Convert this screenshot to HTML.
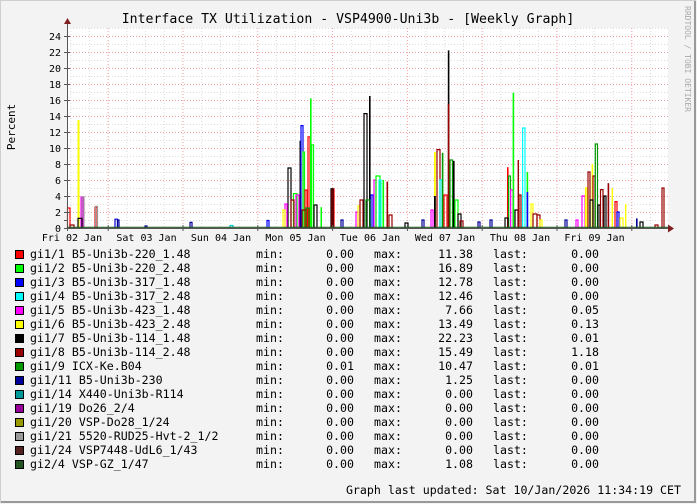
<!DOCTYPE html>
<html><head><meta charset="utf-8"><style>
html,body{margin:0;padding:0;background:#f3f3f3;}
svg{display:block;font-family:"DejaVu Sans Mono","Liberation Mono",monospace;}
</style></head><body>
<svg width="697" height="504" viewBox="0 0 697 504" xmlns="http://www.w3.org/2000/svg">
<rect x="0" y="0" width="697" height="504" fill="#f3f3f3"/>
<path d="M0.5 503 V0.5 H696" stroke="#cfcfcf" fill="none"/>
<path d="M1 502 H695 V1" stroke="#999" stroke-width="2" fill="none"/>
<rect x="67" y="28" width="601" height="200" fill="#ffffff"/>
<g stroke-dasharray="1,2" stroke-width="1">
<g stroke="#dddddd">
<path d="M67 220.5H668M67 204.5H668M67 188.5H668M67 172.5H668M67 156.5H668M67 140.5H668M67 124.5H668M67 108.5H668M67 92.5H668M67 76.5H668M67 60.5H668M67 44.5H668M67 28.5H668"/>
<path d="M70.8 28V228M89.5 28V228M126.9 28V228M145.6 28V228M164.3 28V228M201.7 28V228M220.4 28V228M239.1 28V228M276.5 28V228M295.2 28V228M313.9 28V228M351.3 28V228M370 28V228M388.7 28V228M426.1 28V228M444.8 28V228M463.5 28V228M500.9 28V228M519.6 28V228M538.3 28V228M575.7 28V228M594.4 28V228M613.1 28V228M650.5 28V228"/>
</g>
<g stroke="#f0a0a0">
<path d="M67 212.5H668M67 196.5H668M67 180.5H668M67 164.5H668M67 148.5H668M67 132.5H668M67 116.5H668M67 100.5H668M67 84.5H668M67 68.5H668M67 52.5H668M67 36.5H668"/>
<path d="M108.2 28V228M183 28V228M257.8 28V228M332.6 28V228M407.4 28V228M482.2 28V228M557 28V228M631.8 28V228"/>
</g>
</g>
<g fill="none" stroke-width="1.2">
<path d="M67.5 228V208H70V228" stroke="#ff0000"/>
<rect x="77.5" y="120" width="2" height="108" fill="#ffff00" stroke="none"/>
<path d="M81 228V196.8H83V228" stroke="#ff00ff"/>
<path d="M82 228V196.8H84V228" stroke="#999999"/>
<path d="M78 228V218.4H82V228" stroke="#000"/>
<path d="M95 228V207.2H97V228" stroke="#ff0000"/>
<path d="M95.5 228V206.4H97.5V228" stroke="#999999"/>
<path d="M70 228V225H74V228" stroke="#990000"/>
<path d="M115 228V219.2H117.5V228" stroke="#0000cc"/>
<path d="M117.5 228V220H119V228" stroke="#000099"/>
<path d="M145 228V226H147V228" stroke="#000099"/>
<path d="M190 228V222.4H192V228" stroke="#000099"/>
<path d="M267 228V220.5H269V228" stroke="#0000ff"/>
<path d="M230 228V225.5H233V228" stroke="#00cccc"/>
<path d="M288 228V168H291V228" stroke="#000"/>
<path d="M293.5 228V193.6H297V228" stroke="#00ff00"/>
<path d="M285 228V204H287V228" stroke="#ff00ff"/>
<path d="M283 228V210H285V228" stroke="#ffff00"/>
<path d="M291 228V200H294V228" stroke="#990000"/>
<rect x="299.5" y="140.8" width="1.5" height="87.2" fill="#000"/>
<path d="M301 228V125.6H303V228" stroke="#0000ff"/>
<path d="M303 228V152H304.5V228" stroke="#00ff00"/>
<path d="M305 228V190H307V228" stroke="#ff0000"/>
<path d="M308 228V136.8H310V228" stroke="#ff0000"/>
<rect x="310" y="98.4" width="1.6" height="129.6" fill="#00ff00"/>
<path d="M311.6 228V144.8H313.5V228" stroke="#00ff00"/>
<path d="M314 228V205H317V228" stroke="#000"/>
<path d="M296 228V195H299V228" stroke="#ff00ff"/>
<path d="M302 228V210H306V228" stroke="#990000"/>
<path d="M306 228V208H309V228" stroke="#009900"/>
<rect x="320.5" y="207.2" width="1.5" height="20.8" fill="#00ff00"/>
<path d="M332 228V188.8H334V228" stroke="#ff0000"/>
<path d="M331 228V188.8H333V228" stroke="#000"/>
<path d="M341 228V220H343V228" stroke="#000099"/>
<path d="M356 228V212H358V228" stroke="#ff00ff"/>
<path d="M358 228V206H360V228" stroke="#ffff00"/>
<path d="M360 228V200H363V228" stroke="#990000"/>
<path d="M364 228V113.6H367V228" stroke="#000"/>
<rect x="369" y="96" width="1.6" height="132" fill="#000"/>
<path d="M371 228V195H373V228" stroke="#0000ff"/>
<path d="M374 228V180H376V228" stroke="#ff00ff"/>
<path d="M376 228V176H380V228" stroke="#00ff00"/>
<path d="M379 228V180H381V228" stroke="#00ffff"/>
<rect x="382.5" y="180" width="1.6" height="48" fill="#00ff00"/>
<rect x="386.5" y="181.6" width="1.6" height="46.4" fill="#990000"/>
<path d="M366 228V200H370V228" stroke="#009900"/>
<path d="M389 228V215H392V228" stroke="#990000"/>
<path d="M405 228V223H408V228" stroke="#000"/>
<path d="M422 228V220H424V228" stroke="#000099"/>
<rect x="434" y="152" width="1.8" height="76" fill="#ffff00"/>
<rect x="434" y="196" width="1.8" height="32" fill="#000"/>
<path d="M437 228V149.6H440V228" stroke="#990000"/>
<path d="M440 228V180H442V228" stroke="#00ffff"/>
<rect x="441.8" y="152.8" width="1.6" height="75.2" fill="#009900"/>
<path d="M444 228V195H447V228" stroke="#ff0000"/>
<rect x="447.8" y="50.4" width="1.6" height="177.6" fill="#000"/>
<rect x="447.8" y="104" width="1.6" height="124" fill="#990000"/>
<path d="M450 228V160H452.5V228" stroke="#009900"/>
<rect x="453" y="160.8" width="1.6" height="67.2" fill="#000"/>
<path d="M455 228V200H458V228" stroke="#00ff00"/>
<path d="M458 228V214H461V228" stroke="#000"/>
<path d="M431 228V210H433V228" stroke="#ff00ff"/>
<path d="M478 228V222H480V228" stroke="#000099"/>
<path d="M490 228V220H492V228" stroke="#000099"/>
<path d="M460 228V221H463V228" stroke="#990000"/>
<rect x="507" y="167.2" width="1.6" height="60.8" fill="#ff0000"/>
<path d="M508.6 228V176H510.5V228" stroke="#00aa00"/>
<path d="M510.6 228V190H513V228" stroke="#ff00ff"/>
<rect x="512.6" y="92.8" width="1.6" height="135.2" fill="#00ff00"/>
<path d="M515 228V210H518V228" stroke="#000"/>
<rect x="517.6" y="160" width="1.4" height="68" fill="#990000"/>
<path d="M519 228V195H521V228" stroke="#990000"/>
<path d="M522.6 228V128H525V228" stroke="#00ffff"/>
<rect x="526.6" y="172" width="1.6" height="56" fill="#00ff00"/>
<rect x="526.6" y="192" width="1.6" height="36" fill="#0000ff"/>
<path d="M531 228V204H533V228" stroke="#ffff00"/>
<path d="M533 228V214H537V228" stroke="#990000"/>
<path d="M505 228V218H508V228" stroke="#000"/>
<path d="M537 228V215H540V228" stroke="#990000"/>
<path d="M540 228V220H542V228" stroke="#ffff00"/>
<path d="M565 228V220H567V228" stroke="#000099"/>
<path d="M576 228V220H578V228" stroke="#ff00ff"/>
<path d="M582 228V196H585V228" stroke="#ff00ff"/>
<path d="M585.5 228V188H587V228" stroke="#ffff00"/>
<path d="M588 228V172H590V228" stroke="#990000"/>
<rect x="591.6" y="164" width="1.6" height="64" fill="#ffff00"/>
<path d="M593 228V176H595V228" stroke="#990000"/>
<path d="M595.3 228V144H597.5V228" stroke="#009900"/>
<path d="M590 228V200H593V228" stroke="#000"/>
<path d="M598 228V205H600V228" stroke="#000"/>
<path d="M600.5 228V189.6H603V228" stroke="#990000"/>
<path d="M604 228V196H606V228" stroke="#000"/>
<rect x="607.6" y="183.2" width="1.6" height="44.8" fill="#990000"/>
<rect x="611.6" y="188" width="1.4" height="40" fill="#ffff00"/>
<path d="M615 228V201.6H617V228" stroke="#ff0000"/>
<path d="M617 228V212H619V228" stroke="#0000ff"/>
<path d="M620 228V218H623V228" stroke="#ffff00"/>
<rect x="625" y="204" width="1.4" height="24" fill="#ffff00"/>
<rect x="636" y="218.4" width="1.6" height="9.6" fill="#000099"/>
<path d="M640 228V222H643V228" stroke="#000"/>
<path d="M662 228V188H664V228" stroke="#990000"/>
<path d="M655 228V225H658V228" stroke="#990000"/>
<path d="M67 227.3H668" stroke="#225522" stroke-width="1.2"/>
</g>
<g stroke="#555" stroke-width="1">
<path d="M67.5 231V24"/>
<path d="M64 228.5H668"/>
<path d="M64 220.5H67M64 212.5H70M64 196.5H70M64 180.5H70M64 164.5H70M64 148.5H70M64 132.5H70M64 116.5H70M64 100.5H70M64 84.5H70M64 68.5H70M64 52.5H70M64 36.5H70"/>
<path d="M108.2 225V231M183 225V231M257.8 225V231M332.6 225V231M407.4 225V231M482.2 225V231M557 225V231M631.8 225V231"/>
</g>
<path d="M64 24L67.5 18L71 24Z" fill="#802020"/>
<path d="M668 224.5L674 228.5L668 232.5Z" fill="#802020"/>
<g font-size="10" fill="#000" text-anchor="end">
<text x="61" y="232">0</text><text x="61" y="216">2</text><text x="61" y="200">4</text><text x="61" y="184">6</text>
<text x="61" y="168">8</text><text x="61" y="152">10</text><text x="61" y="136">12</text><text x="61" y="120">14</text>
<text x="61" y="104">16</text><text x="61" y="88">18</text><text x="61" y="72">20</text><text x="61" y="56">22</text><text x="61" y="40">24</text>
</g>
<g font-size="10" fill="#000" text-anchor="middle">
<text x="72" y="241">Fri 02 Jan</text><text x="146.5" y="241">Sat 03 Jan</text><text x="221" y="241">Sun 04 Jan</text>
<text x="295.5" y="241">Mon 05 Jan</text><text x="370" y="241">Tue 06 Jan</text><text x="445" y="241">Wed 07 Jan</text>
<text x="520" y="241">Thu 08 Jan</text><text x="594.5" y="241">Fri 09 Jan</text>
</g>
<text x="348" y="23" font-size="13.2" text-anchor="middle" fill="#000">Interface TX Utilization - VSP4900-Uni3b - [Weekly Graph]</text>
<text transform="translate(15,127) rotate(-90)" font-size="11" text-anchor="middle" fill="#000">Percent</text>
<text transform="translate(685,6) rotate(90)" font-size="8" fill="#aaa">RRDTOOL / TOBI OETIKER</text>
<g font-size="11.6" fill="#000" style="white-space:pre">
<g stroke="#000" stroke-width="1">
<rect x="15.5" y="250.5" width="8" height="8" fill="#ff0000"/>
<rect x="15.5" y="264.5" width="8" height="8" fill="#00ff00"/>
<rect x="15.5" y="278.5" width="8" height="8" fill="#0000ff"/>
<rect x="15.5" y="292.5" width="8" height="8" fill="#00ffff"/>
<rect x="15.5" y="306.5" width="8" height="8" fill="#ff00ff"/>
<rect x="15.5" y="320.5" width="8" height="8" fill="#ffff00"/>
<rect x="15.5" y="334.5" width="8" height="8" fill="#000000"/>
<rect x="15.5" y="348.5" width="8" height="8" fill="#990000"/>
<rect x="15.5" y="362.5" width="8" height="8" fill="#009900"/>
<rect x="15.5" y="376.5" width="8" height="8" fill="#000099"/>
<rect x="15.5" y="390.5" width="8" height="8" fill="#009999"/>
<rect x="15.5" y="404.5" width="8" height="8" fill="#990099"/>
<rect x="15.5" y="418.5" width="8" height="8" fill="#999900"/>
<rect x="15.5" y="432.5" width="8" height="8" fill="#999999"/>
<rect x="15.5" y="446.5" width="8" height="8" fill="#552222"/>
<rect x="15.5" y="460.5" width="8" height="8" fill="#225522"/>
</g>
<text x="30" y="258">gi1/1 B5-Uni3b-220_1.48</text>
<text x="30" y="272">gi1/2 B5-Uni3b-220_2.48</text>
<text x="30" y="286">gi1/3 B5-Uni3b-317_1.48</text>
<text x="30" y="300">gi1/4 B5-Uni3b-317_2.48</text>
<text x="30" y="314">gi1/5 B5-Uni3b-423_1.48</text>
<text x="30" y="328">gi1/6 B5-Uni3b-423_2.48</text>
<text x="30" y="342">gi1/7 B5-Uni3b-114_1.48</text>
<text x="30" y="356">gi1/8 B5-Uni3b-114_2.48</text>
<text x="30" y="370">gi1/9 ICX-Ke.B04</text>
<text x="30" y="384">gi1/11 B5-Uni3b-230</text>
<text x="30" y="398">gi1/14 X440-Uni3b-R114</text>
<text x="30" y="412">gi1/19 Do26_2/4</text>
<text x="30" y="426">gi1/20 VSP-Do28_1/24</text>
<text x="30" y="440">gi1/21 5520-RUD25-Hvt-2_1/2</text>
<text x="30" y="454">gi1/24 VSP7448-UdL6_1/43</text>
<text x="30" y="468">gi2/4 VSP-GZ_1/47</text>
<g>
<text x="256" y="258">min:</text><text x="256" y="272">min:</text><text x="256" y="286">min:</text><text x="256" y="300">min:</text>
<text x="256" y="314">min:</text><text x="256" y="328">min:</text><text x="256" y="342">min:</text><text x="256" y="356">min:</text>
<text x="256" y="370">min:</text><text x="256" y="384">min:</text><text x="256" y="398">min:</text><text x="256" y="412">min:</text>
<text x="256" y="426">min:</text><text x="256" y="440">min:</text><text x="256" y="454">min:</text><text x="256" y="468">min:</text>
<text x="374" y="258">max:</text><text x="374" y="272">max:</text><text x="374" y="286">max:</text><text x="374" y="300">max:</text>
<text x="374" y="314">max:</text><text x="374" y="328">max:</text><text x="374" y="342">max:</text><text x="374" y="356">max:</text>
<text x="374" y="370">max:</text><text x="374" y="384">max:</text><text x="374" y="398">max:</text><text x="374" y="412">max:</text>
<text x="374" y="426">max:</text><text x="374" y="440">max:</text><text x="374" y="454">max:</text><text x="374" y="468">max:</text>
<text x="493" y="258">last:</text><text x="493" y="272">last:</text><text x="493" y="286">last:</text><text x="493" y="300">last:</text>
<text x="493" y="314">last:</text><text x="493" y="328">last:</text><text x="493" y="342">last:</text><text x="493" y="356">last:</text>
<text x="493" y="370">last:</text><text x="493" y="384">last:</text><text x="493" y="398">last:</text><text x="493" y="412">last:</text>
<text x="493" y="426">last:</text><text x="493" y="440">last:</text><text x="493" y="454">last:</text><text x="493" y="468">last:</text>
</g>
<g text-anchor="end">
<text x="354" y="258">0.00</text><text x="354" y="272">0.00</text><text x="354" y="286">0.00</text><text x="354" y="300">0.00</text>
<text x="354" y="314">0.00</text><text x="354" y="328">0.00</text><text x="354" y="342">0.00</text><text x="354" y="356">0.00</text>
<text x="354" y="370">0.01</text><text x="354" y="384">0.00</text><text x="354" y="398">0.00</text><text x="354" y="412">0.00</text>
<text x="354" y="426">0.00</text><text x="354" y="440">0.00</text><text x="354" y="454">0.00</text><text x="354" y="468">0.00</text>
<text x="473" y="258">11.38</text><text x="473" y="272">16.89</text><text x="473" y="286">12.78</text><text x="473" y="300">12.46</text>
<text x="473" y="314">7.66</text><text x="473" y="328">13.49</text><text x="473" y="342">22.23</text><text x="473" y="356">15.49</text>
<text x="473" y="370">10.47</text><text x="473" y="384">1.25</text><text x="473" y="398">0.00</text><text x="473" y="412">0.00</text>
<text x="473" y="426">0.00</text><text x="473" y="440">0.00</text><text x="473" y="454">0.00</text><text x="473" y="468">1.08</text>
<text x="599" y="258">0.00</text><text x="599" y="272">0.00</text><text x="599" y="286">0.00</text><text x="599" y="300">0.00</text>
<text x="599" y="314">0.05</text><text x="599" y="328">0.13</text><text x="599" y="342">0.01</text><text x="599" y="356">1.18</text>
<text x="599" y="370">0.01</text><text x="599" y="384">0.00</text><text x="599" y="398">0.00</text><text x="599" y="412">0.00</text>
<text x="599" y="426">0.00</text><text x="599" y="440">0.00</text><text x="599" y="454">0.00</text><text x="599" y="468">0.00</text>
</g>
<text x="681" y="494" text-anchor="end">Graph last updated: Sat 10/Jan/2026 11:34:19 CET</text>
</g>
</svg>
</body></html>
